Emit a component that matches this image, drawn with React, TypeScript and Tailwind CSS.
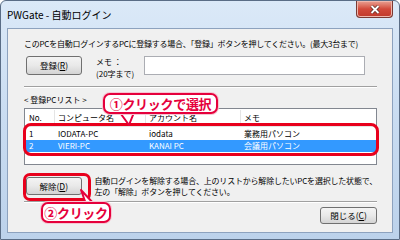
const font = { fontFamily: '"Noto Sans CJK JP", "Noto Sans", sans-serif' };

type Row = { no: string; pc: string; account: string; memo: string; selected?: boolean };

const rows: Row[] = [
  { no: "1", pc: "IODATA-PC", account: "iodata", memo: "業務用パソコン" },
  { no: "2", pc: "VIERI-PC", account: "KANAI PC", memo: "会議用パソコン", selected: true },
];

const WinButton = ({ label, hot, className = "" }: { label: string; hot: string; className?: string }) => (
  <div
    className={`flex items-center justify-center rounded-[3px] border border-[#707070] bg-gradient-to-b from-[#f4f4f4] via-[#e9e9e9] to-[#d4d4d4] text-[8.5px] text-black ${className}`}
  >
    {label}(<span className="underline">{hot}</span>)
  </div>
);

const Callout = ({ text, className }: { text: string; className: string }) => (
  <div
    className={`absolute flex items-center justify-center whitespace-nowrap rounded-[7px] border-2 border-[#e5003c] bg-white text-[13px] font-bold leading-none tracking-[-0.3px] text-[#e5003c] shadow-[0_0_0_1px_#f6c6d2] ${className}`}
  >
    {text}
  </div>
);

export default function App() {
  return (
    <div
      className="relative h-[240px] w-[400px] overflow-hidden rounded-t-[6px] border border-[#5a6d86] bg-gradient-to-b from-[#dbe9f8] via-[#c9dcf1] to-[#bcd2eb] text-black"
      style={font}
    >
      {/* title bar */}
      <div className="flex h-[27px] items-center pl-[6px] text-[10px] text-black">PWGate - 自動ログイン</div>

      {/* close button */}
      <div className="absolute right-[6px] top-0 flex h-[17px] w-[37px] items-center justify-center rounded-b-[4px] border border-t-0 border-[#7a3a34] bg-gradient-to-b from-[#e8a093] via-[#d2493a] to-[#c0392b] shadow-[inset_0_0_0_1px_#efb6ab]">
        <svg width="10" height="9" viewBox="0 0 10 9">
          <path d="M1.5 1 L8.5 8 M8.5 1 L1.5 8" stroke="#4a1a14" strokeWidth="3.2" />
          <path d="M1.5 1 L8.5 8 M8.5 1 L1.5 8" stroke="white" strokeWidth="2" />
        </svg>
      </div>

      {/* client area */}
      <div className="relative mx-[6px] flex h-[205px] flex-col border border-[#8da2be] bg-[#f0f0f0] pl-[16px] pr-[15px] text-[8px] leading-none">
        <div className="mt-[11px] whitespace-nowrap tracking-[-0.25px]">
          このPCを自動ログインするPCに登録する場合、「登録」ボタンを押してください。(最大3台まで)
        </div>

        <div className="mt-[8px] flex items-start">
          <WinButton label="登録" hot="R" className="ml-[2px] h-[19px] w-[56px]" />
          <div className="ml-[14px] mt-[2px] flex flex-col gap-[4px]">
            <span>メモ ：</span>
            <span>(20字まで)</span>
          </div>
          <div className="ml-[10px] h-[19px] w-[221px] border border-[#abadb3] bg-white" />
        </div>

        <div className="mt-[8px] h-[2px] border-t border-b border-t-[#a0a0a0] border-b-white" />

        <div className="mt-[8px]">&lt; 登録PCリスト &gt;</div>

        <div className="mt-[4px] flex h-[57px] flex-col border border-[#828790] bg-white">
          <div className="grid h-[18px] grid-cols-[30px_91px_95px_1fr] items-center border-b border-[#e5e5e5]">
            <span className="border-r border-[#e5e5e5] py-[4px] pl-[4px]">No.</span>
            <span className="border-r border-[#e5e5e5] py-[4px] pl-[3px]">コンピュータ名</span>
            <span className="border-r border-[#e5e5e5] py-[4px] pl-[3px]">アカウント名</span>
            <span className="py-[4px] pl-[3px]">メモ</span>
          </div>
          <div className="mt-[1px] flex flex-col">
            {rows.map((r) => (
              <div
                key={r.no}
                className={`grid h-[12px] grid-cols-[30px_91px_95px_1fr] items-center ${
                  r.selected ? "bg-[#3399ff] text-white" : ""
                }`}
              >
                <span className="pl-[4px]">{r.no}</span>
                <span className="pl-[3px]">{r.pc}</span>
                <span className="pl-[3px]">{r.account}</span>
                <span className="pl-[3px]">{r.memo}</span>
              </div>
            ))}
          </div>
        </div>

        <div className="mt-[12px] flex items-start">
          <WinButton label="解除" hot="D" className="ml-[2px] h-[18px] w-[56px]" />
          <div className="ml-[13px] flex flex-col gap-[3px] whitespace-nowrap tracking-[-0.2px]">
            <span>自動ログインを解除する場合、上のリストから解除したいPCを選択した状態で、</span>
            <span>左の「解除」ボタンを押してください。</span>
          </div>
        </div>

        <div className="mt-[5px] h-[2px] border-t border-b border-t-[#a0a0a0] border-b-white" />

        <div className="mt-[4px] flex justify-end">
          <WinButton label="閉じる" hot="C" className="h-[17px] w-[57px]" />
        </div>
      </div>

      {/* red highlight around list rows */}
      <div className="absolute left-[22px] top-[122px] h-[33px] w-[356px] rounded-[8px] border-[3px] border-[#e8001c]" />
      {/* red highlight around 解除 button */}
      <div className="absolute left-[22px] top-[172px] h-[28px] w-[68px] rounded-[7px] border-[3px] border-[#e8001c]" />

      {/* callout 1 tail */}
      <svg className="absolute left-[112px] top-[109px]" width="24" height="17" viewBox="0 0 24 17">
        <path d="M5 0 L16 15 L22 0 Z" fill="white" stroke="#e5003c" strokeWidth="2" strokeLinejoin="round" />
      </svg>
      <Callout text="①クリックで選択" className="left-[102px] top-[92px] h-[21px] w-[115px]" />

      {/* callout 2 tail */}
      <svg className="absolute left-[76px] top-[187px]" width="24" height="17" viewBox="0 0 24 17">
        <path d="M4 2 L9 16 L17 16 Z" fill="white" stroke="#e5003c" strokeWidth="2" strokeLinejoin="round" />
      </svg>
      <Callout text="②クリック" className="left-[40px] top-[201px] h-[21px] w-[70px]" />
    </div>
  );
}
